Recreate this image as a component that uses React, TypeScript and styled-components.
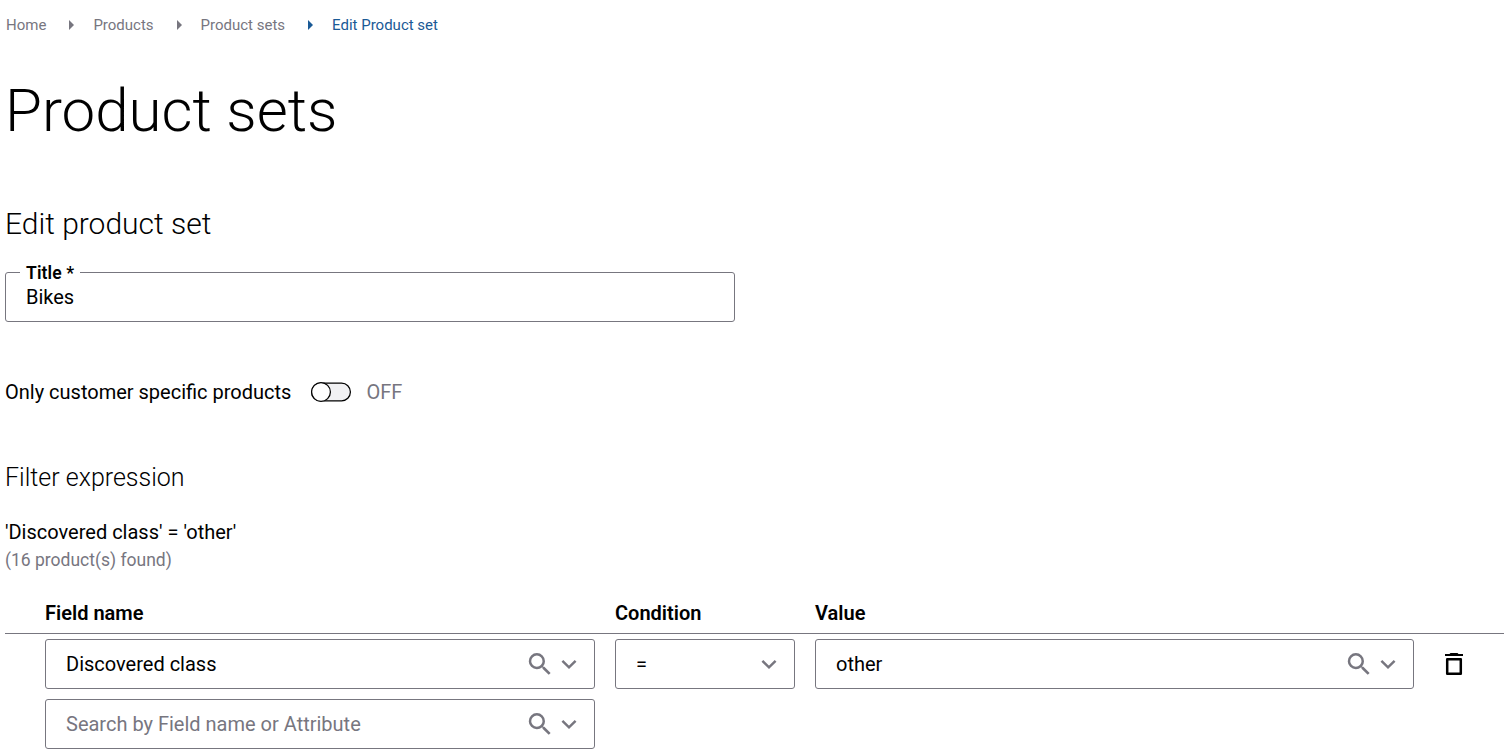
import React from 'react';
import styled, { createGlobalStyle } from 'styled-components';

const gray = '#77767f';
const blue = '#1a5a96';

const GlobalStyle = createGlobalStyle`
  *, *::before, *::after { box-sizing: border-box; }
  body { margin: 0; background: #fff; color: #000; font-family: Roboto, sans-serif; overflow: hidden; }
`;

const Page = styled.main`
  display: flex;
  flex-direction: column;
  padding: 0 4px 0 5px;
  height: 754px;
`;
const Breadcrumbs = styled.nav`
  display: flex;
  align-items: center;
  height: 20px;
  margin-top: 15px;
  padding-left: 1px;
  font-size: 15px;
  line-height: 20px;
`;
const Crumb = styled.span<{ $active?: boolean }>`
  color: ${p => (p.$active ? blue : gray)};
`;
const Arrow = styled.svg`
  width: 5px;
  height: 10px;
  margin: 0 19px 0 23px;
`;
const PageTitle = styled.h1`
  margin: 40px 0 0;
  font-size: 60px;
  font-weight: 300;
  line-height: 72px;
`;
const SectionTitle = styled.h2`
  margin: 59px 0 0;
  font-size: 30px;
  font-weight: 300;
  line-height: 36px;
`;
const SubTitle = styled.h3`
  margin: 56px 0 0;
  font-size: 25px;
  font-weight: 300;
  line-height: 30px;
`;
const TitleField = styled.fieldset`
  width: 730px;
  height: 60px;
  margin: 20px 0 0;
  padding: 0 20px;
  border: 1px solid ${gray};
  border-radius: 3px;
`;
const Legend = styled.legend`
  margin-left: -6px;
  padding: 3px 6px 0;
  font-size: 17.5px;
  font-weight: 600;
  letter-spacing: 0.12px;
  line-height: 17px;
`;
const TextValue = styled.div`
  font-size: 20px;
  line-height: 30px;
`;
const SwitchRow = styled.div`
  display: flex;
  align-items: center;
  height: 30px;
  margin-top: 55px;
  font-size: 20px;
`;
const Toggle = styled.svg`
  width: 42px;
  height: 22px;
  margin: 0 14px 0 19px;
`;
const State = styled.span`
  color: ${gray};
`;
const Expression = styled.p`
  margin: 24px 0 0;
  font-size: 20px;
  line-height: 30px;
`;
const Count = styled.p`
  margin: 0;
  color: ${gray};
  font-size: 17.5px;
  line-height: 26px;
`;
const Row = styled.div<{ $head?: boolean }>`
  display: grid;
  grid-template-columns: 550px 180px 599px 40px;
  column-gap: 20px;
  align-items: center;
  height: ${p => (p.$head ? '41px' : '50px')};
  margin-top: ${p => (p.$head ? '20px' : '0')};
  padding-left: 40px;
  border-bottom: ${p => (p.$head ? `1px solid ${gray}` : '0')};
  font-size: 20px;
  font-weight: ${p => (p.$head ? 600 : 400)};
`;
const Rows = styled.div`
  display: flex;
  flex-direction: column;
  gap: 10px;
  padding-top: 5px;
`;
const Select = styled.div<{ $muted?: boolean }>`
  display: flex;
  align-items: center;
  height: 50px;
  padding: 0 17px 0 20px;
  border: 1px solid ${gray};
  border-radius: 3px;
  color: ${p => (p.$muted ? gray : '#000')};
`;
const SelectText = styled.span`
  flex: 1;
`;
const SearchGlyph = styled.svg`
  width: 30px;
  height: 30px;
  margin-right: 6px;
`;
const ChevronGlyph = styled.svg`
  width: 16px;
  height: 16px;
`;
const TrashButton = styled.button`
  display: flex;
  justify-content: center;
  align-items: center;
  width: 40px;
  height: 40px;
  padding: 0;
  border: 0;
  background: none;
`;

const Separator = ({ active }: { active?: boolean }) => (
  <Arrow viewBox="0 0 5 10"><path d="M0 0 5 5 0 10Z" fill={active ? blue : gray} /></Arrow>
);
const Search = () => (
  <SearchGlyph viewBox="0 -0.2 24 24">
    <path fill={gray} d="M15.5 14h-.79l-.28-.27A6.47 6.47 0 0 0 16 9.5 6.5 6.5 0 1 0 9.5 16c1.61 0 3.09-.59 4.23-1.57l.27.28v.79l5 4.99L20.49 19l-4.99-5zm-6 0a4.5 4.5 0 1 1 0-9 4.5 4.5 0 0 1 0 9z" />
  </SearchGlyph>
);
const Chevron = () => (
  <ChevronGlyph viewBox="0 0 16 16"><path d="M1.4 4.9 8 11.3l6.6-6.4" fill="none" stroke={gray} strokeWidth="2.5" /></ChevronGlyph>
);

type PickerProps = { text: string; searchable?: boolean; muted?: boolean };
const Picker = ({ text, searchable, muted }: PickerProps) => (
  <Select $muted={muted}>
    <SelectText>{text}</SelectText>
    {searchable && <Search />}
    <Chevron />
  </Select>
);

export default function App() {
  return (
    <>
      <GlobalStyle />
      <Page>
        <Breadcrumbs>
          <Crumb>Home</Crumb><Separator />
          <Crumb>Products</Crumb><Separator />
          <Crumb>Product sets</Crumb><Separator active />
          <Crumb $active>Edit Product set</Crumb>
        </Breadcrumbs>
        <PageTitle>Product sets</PageTitle>
        <SectionTitle>Edit product set</SectionTitle>
        <TitleField>
          <Legend>Title *</Legend>
          <TextValue>Bikes</TextValue>
        </TitleField>
        <SwitchRow>
          <span>Only customer specific products</span>
          <Toggle viewBox="0 0 42 22">
            <rect x="1.6" y="2.2" width="38.8" height="17.6" rx="8.8" fill="#f1f1f3" stroke="#000" strokeWidth="1.25" />
            <circle cx="11" cy="11" r="9.4" fill="#fff" stroke="#000" strokeWidth="1.25" />
          </Toggle>
          <State>OFF</State>
        </SwitchRow>
        <SubTitle>Filter expression</SubTitle>
        <Expression>'Discovered class' = 'other'</Expression>
        <Count>(16 product(s) found)</Count>
        <Row $head>
          <span>Field name</span>
          <span>Condition</span>
          <span>Value</span>
        </Row>
        <Rows>
          <Row>
            <Picker text="Discovered class" searchable />
            <Picker text="=" />
            <Picker text="other" searchable />
            <TrashButton aria-label="Delete">
              <svg width="20" height="24" viewBox="0 0 20 24">
                <path d="M1 2h4.5l1-1h7l1 1H19v2H1Z" />
                <path d="M3.2 7.2h13.6v14.6H3.2Z" fill="none" stroke="#000" strokeWidth="2.5" strokeLinejoin="round" />
              </svg>
            </TrashButton>
          </Row>
          <Row>
            <Picker text="Search by Field name or Attribute" searchable muted />
          </Row>
        </Rows>
      </Page>
    </>
  );
}
